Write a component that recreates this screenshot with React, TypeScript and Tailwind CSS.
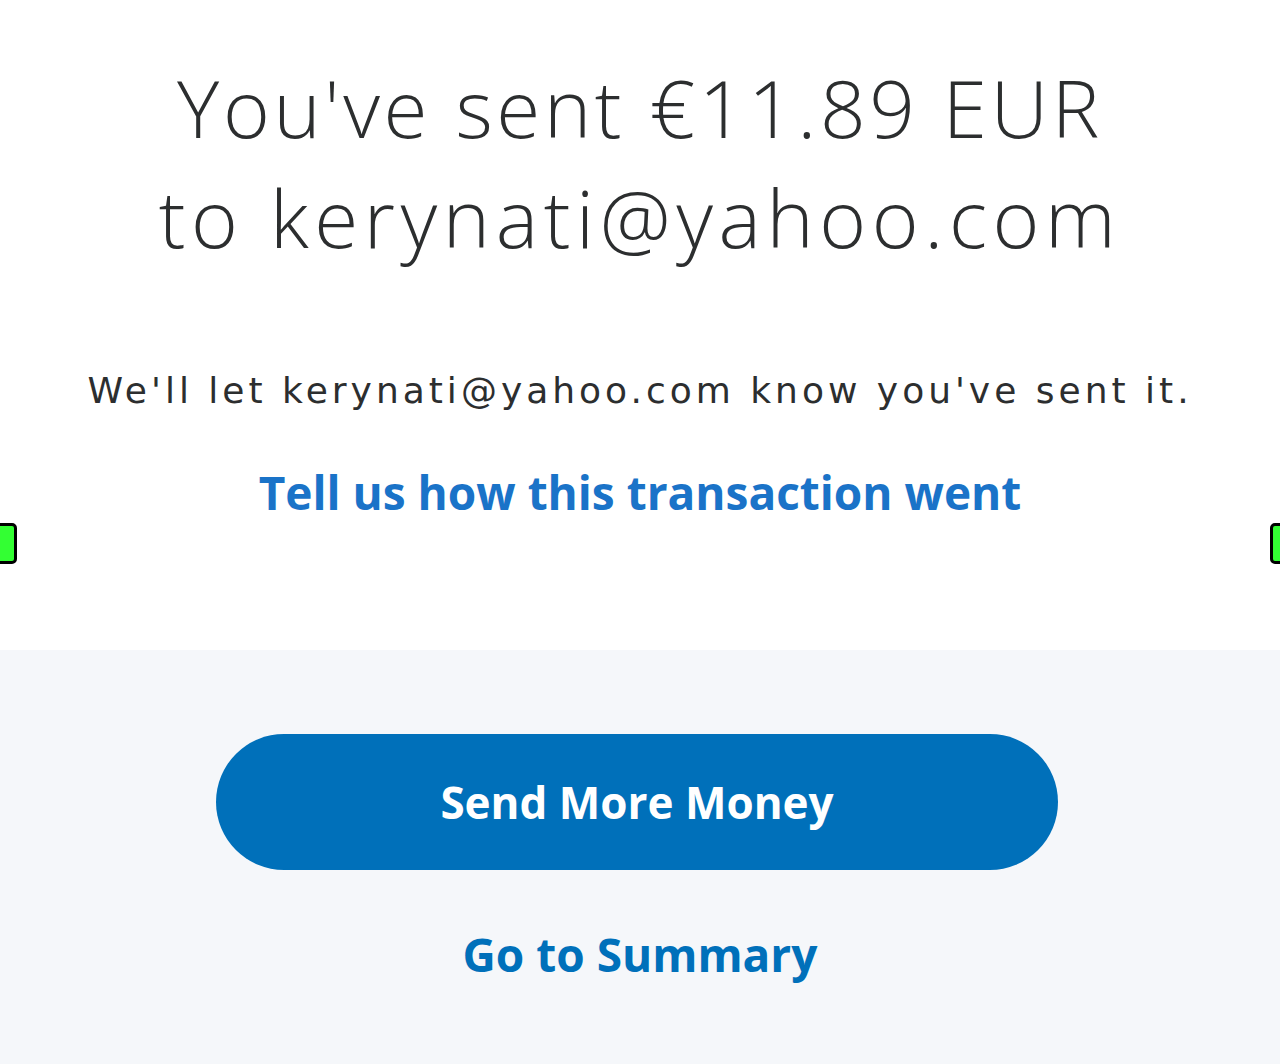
import React from "react";

function Handle({ side }: { side: "left" | "right" }) {
  return (
    <div
      className={
        "absolute top-[523px] h-[41px] w-[28px] rounded-[5px] border-[3px] border-black bg-[#33ff33] " +
        (side === "left" ? "left-[-11px]" : "right-[-18px]")
      }
    />
  );
}

function App() {
  return (
    <div className="relative flex h-[1064px] w-full flex-col overflow-hidden bg-white font-['Open_Sans',sans-serif]">
      <div className="flex h-[650px] flex-col items-center pt-[52px]">
        <h1 className="flex flex-col items-center text-[80px] font-light leading-[110px] text-[#2c2e2f]">
          <span className="tracking-[3.6px]">You've sent €11.89 EUR</span>
          <span className="tracking-[5.6px]">to kerynati@yahoo.com</span>
        </h1>
        <p className="mt-[99px] font-['DejaVu_Sans',sans-serif] text-[36px] leading-[40px] tracking-[4px] text-[#2c2e2f]">
          We'll let kerynati@yahoo.com know you've sent it.
        </p>
        <a className="mt-[55px] text-[46px] font-bold leading-[52px] text-[#1a73c8]">
          Tell us how this transaction went
        </a>
      </div>
      <div className="flex flex-1 flex-col items-center bg-[#f5f7fa] pt-[84px]">
        <button className="mr-[6px] flex h-[136px] w-[842px] items-center justify-center rounded-full bg-[#0070ba] text-[44px] font-bold text-white">
          Send More Money
        </button>
        <a className="mt-[58px] text-[46px] font-bold leading-[52px] text-[#0070ba]">
          Go to Summary
        </a>
      </div>
      <Handle side="left" />
      <Handle side="right" />
    </div>
  );
}

export default App;
